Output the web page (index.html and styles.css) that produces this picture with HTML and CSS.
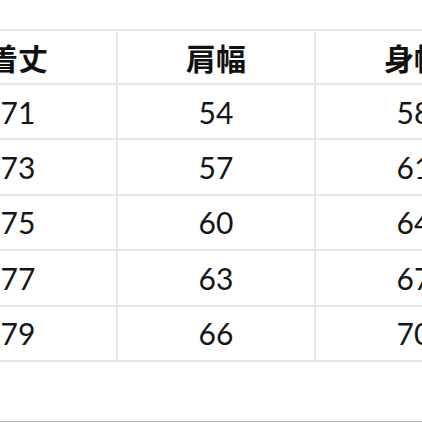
FILE: index.html
```html
<!DOCTYPE html>
<html lang="ja">
<head>
<meta charset="utf-8">
<link rel="stylesheet" href="styles.css">
</head>
<body>
<div class="page">
  <table class="size-table">
    <colgroup><col class="c"><col class="c"><col class="c"></colgroup>
    <thead>
      <tr><th>着丈</th><th>肩幅</th><th>身幅</th></tr>
    </thead>
    <tbody>
      <tr><td>71</td><td>54</td><td>58</td></tr>
      <tr><td>73</td><td>57</td><td>61</td></tr>
      <tr><td>75</td><td>60</td><td>64</td></tr>
      <tr><td>77</td><td>63</td><td>67</td></tr>
      <tr><td>79</td><td>66</td><td>70</td></tr>
    </tbody>
  </table>
</div>
</body>
</html>
```
FILE: styles.css
```css
html, body {
  margin: 0;
  padding: 0;
  background: #ffffff;
}
.page {
  width: 422px;
  height: 422px;
  box-sizing: border-box;
  overflow: hidden;
  padding-top: 29px;
  border-bottom: 1px solid #bdbdbd;
}
.size-table {
  margin-left: -80px;
  table-layout: fixed;
  width: 594px;
  border-collapse: separate;
  border-spacing: 0;
  border-top: 2px solid #e6e6e6;
}
.size-table .c {
  width: 198px;
}
.size-table th,
.size-table td {
  padding: 0;
  text-align: center;
  vertical-align: middle;
  border-right: 2px solid #e6e6e6;
  border-bottom: 2px solid #e6e6e6;
  color: #161616;
}
.size-table th {
  height: 52px;
  font-family: "Noto Sans CJK JP", sans-serif;
  font-weight: 700;
  font-size: 30px;
  line-height: 1;
  color: #111;
}
.size-table td {
  height: 53.4px;
  font-family: "Lato", "Noto Sans", sans-serif;
  font-weight: 400;
  font-size: 30px;
  line-height: 1;
}
```
